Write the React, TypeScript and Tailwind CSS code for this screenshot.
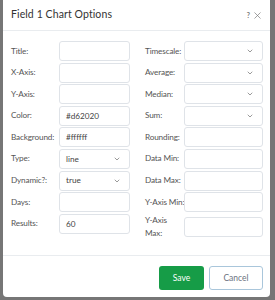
import { ChevronDown, X } from "lucide-react";

interface Field {
  label: string;
  value?: string;
  select?: boolean;
}

const leftFields: Field[] = [
  { label: "Title:" },
  { label: "X-Axis:" },
  { label: "Y-Axis:" },
  { label: "Color:", value: "#d62020" },
  { label: "Background:", value: "#ffffff" },
  { label: "Type:", value: "line", select: true },
  { label: "Dynamic?:", value: "true", select: true },
  { label: "Days:" },
  { label: "Results:", value: "60" },
];

const rightFields: Field[] = [
  { label: "Timescale:", select: true },
  { label: "Average:", select: true },
  { label: "Median:", select: true },
  { label: "Sum:", select: true },
  { label: "Rounding:" },
  { label: "Data Min:" },
  { label: "Data Max:" },
  { label: "Y-Axis Min:" },
];

function Row({ field, labelW, inputW }: { field: Field; labelW: string; inputW: string }) {
  return (
    <div className="flex items-center">
      <div
        className={`${labelW} shrink-0 whitespace-nowrap text-[8.2px] leading-[13px] tracking-[-0.15px] text-[#555]`}
      >
        {field.label}
      </div>
      <div
        className={`${inputW} h-[20px] shrink-0 flex items-center justify-between rounded-[3px] border border-[#dfe3e8] bg-white pl-[6px] pr-[8px] text-[8.2px] text-[#444]`}
      >
        <span>{field.value ?? ""}</span>
        {field.select && <ChevronDown size={8} strokeWidth={2} className="text-[#666]" />}
      </div>
    </div>
  );
}

export default function App() {
  return (
    <div
      className="w-[275px] h-[300px] bg-[#767676] pl-[3px] overflow-hidden"
      style={{ fontFamily: "Lato, 'Open Sans', sans-serif" }}
    >
      <div className="w-[267px] h-[297px] bg-white rounded-b-[4px] flex flex-col">
        {/* Header */}
        <div className="h-[31px] shrink-0 flex items-center justify-between pl-[8px] pr-[7px] border-b border-[#e9ecef]">
          <h1 className="text-[10.5px] text-[#333] tracking-[0.1px]">Field 1 Chart Options</h1>
          <div className="flex items-center gap-[2px] text-[#777]">
            <span className="text-[7px] font-bold">?</span>
            <X size={11} strokeWidth={1.5} />
          </div>
        </div>

        {/* Body */}
        <div className="flex pt-[10px] pl-[8px] gap-[15px] h-[225px] shrink-0 border-b border-[#e9ecef]">
          <div className="flex flex-col gap-[1.6px]">
            {leftFields.map((f) => (
              <Row key={f.label} field={f} labelW="w-[48px]" inputW="w-[71px]" />
            ))}
          </div>
          <div className="flex flex-col gap-[1.6px]">
            {rightFields.map((f) => (
              <Row key={f.label} field={f} labelW="w-[39px]" inputW="w-[79px]" />
            ))}
            <div className="flex items-center">
              <div className="w-[39px] shrink-0 text-[8.2px] leading-[13px] tracking-[-0.15px] text-[#555]">
                Y-Axis
                <br />
                Max:
              </div>
              <div className="w-[79px] h-[20px] rounded-[3px] border border-[#dfe3e8]" />
            </div>
          </div>
        </div>

        {/* Footer */}
        <div className="flex justify-end gap-[5px] pt-[10px] pr-[7px]">
          <button className="w-[45px] h-[24px] rounded-[3px] bg-[#169c47] text-white text-[8.5px]">
            Save
          </button>
          <button className="w-[54px] h-[24px] rounded-[3px] border border-[#a9c6db] bg-white text-[#6b7280] text-[8.5px]">
            Cancel
          </button>
        </div>
      </div>
    </div>
  );
}
